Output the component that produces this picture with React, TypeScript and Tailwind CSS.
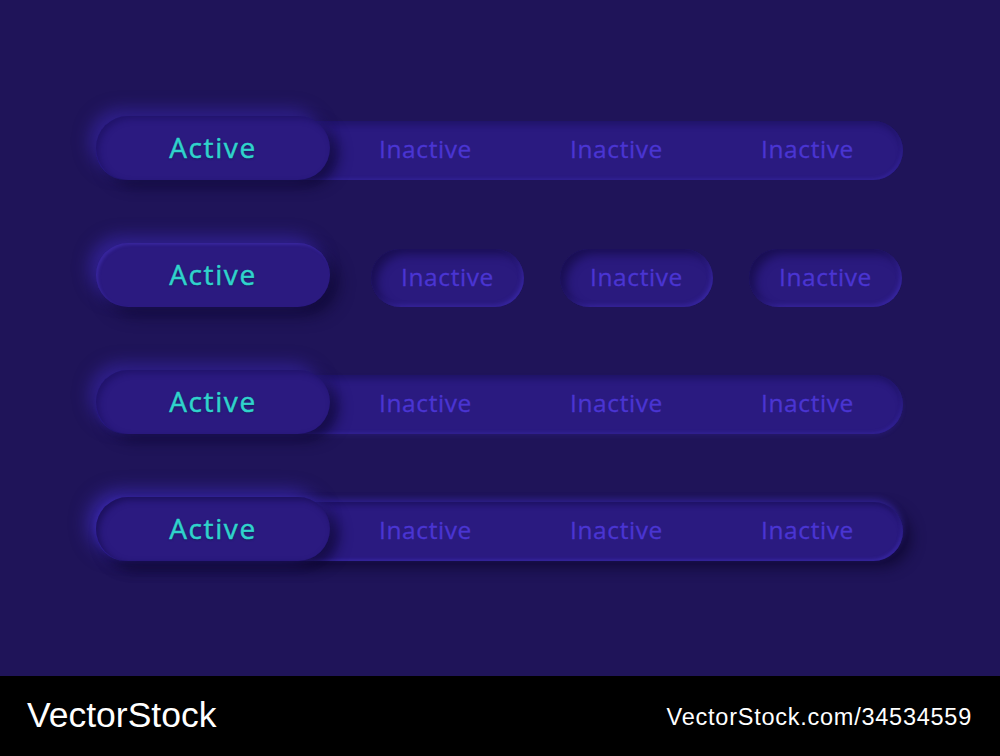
import React from "react";

const font = { fontFamily: '"Open Sans", "Noto Sans", sans-serif' };

function ActivePill({ variant }: { variant: number }) {
  const shadow =
    variant === 2
      ? "shadow-[-7px_-7px_16px_rgba(64,44,190,0.55),8px_8px_16px_rgba(14,8,48,0.75),inset_2px_2px_3px_rgba(80,60,210,0.35)]"
      : variant === 4
      ? "shadow-[-8px_-6px_18px_rgba(70,50,210,0.6),8px_6px_14px_rgba(14,8,48,0.8),inset_3px_3px_6px_rgba(18,10,70,0.6)]"
      : "shadow-[-7px_-7px_16px_rgba(64,44,190,0.5),8px_6px_14px_rgba(14,8,48,0.75),inset_3px_3px_6px_rgba(20,12,80,0.45)]";
  return (
    <div
      className={`flex h-[64px] w-[234px] shrink-0 items-center justify-center rounded-full bg-[#2b1a80] ${shadow}`}
    >
      <span
        className="-mt-[2px] text-[28px] leading-none tracking-[1.6px] text-[#30d3cc] [-webkit-text-stroke:0.5px_#30d3cc] [text-shadow:0_1px_2px_rgba(10,30,60,0.6)]"
        style={font}
      >
        Active
      </span>
    </div>
  );
}

function Label() {
  return (
    <div className="flex flex-1 items-center justify-center">
      <span
        className="-mt-[3px] text-[24.5px] leading-none tracking-[0.6px] text-[#4a35d2] [-webkit-text-stroke:0.3px_#4a35d2]"
        style={font}
      >
        Inactive
      </span>
    </div>
  );
}

function TrackRow({ variant }: { variant: number }) {
  const track =
    variant === 4
      ? "shadow-[0_-3px_6px_rgba(70,50,210,0.45),8px_6px_14px_rgba(14,8,48,0.8),inset_0_3px_5px_rgba(18,10,70,0.5),inset_-2px_-2px_3px_rgba(80,60,220,0.35)]"
      : variant === 3
      ? "shadow-[inset_0_4px_6px_rgba(18,10,70,0.45),inset_-2px_-2px_3px_rgba(70,52,200,0.3),0_2px_4px_rgba(60,44,180,0.2)]"
      : "shadow-[inset_0_4px_6px_rgba(18,10,70,0.4),inset_-2px_-2px_3px_rgba(70,52,200,0.3)]";
  return (
    <div className="flex h-[64px] w-[807px] items-end">
      <div className={`flex h-[59px] w-full items-end rounded-full bg-[#2a1a80] ${track}`}>
        <ActivePill variant={variant} />
        <div className="flex h-[59px] flex-1 items-center">
          <Label />
          <Label />
          <Label />
        </div>
      </div>
    </div>
  );
}

function SmallPill() {
  return (
    <div className="flex h-[58px] w-[153px] shrink-0 items-center justify-center rounded-full bg-[#2a1a7e] shadow-[inset_6px_5px_10px_rgba(18,10,66,0.7),inset_-2px_-2px_4px_rgba(76,56,210,0.45)]">
      <span
        className="-mt-[2px] text-[24.5px] leading-none tracking-[0.6px] text-[#4a35d2] [-webkit-text-stroke:0.3px_#4a35d2]"
        style={font}
      >
        Inactive
      </span>
    </div>
  );
}

function PillsRow() {
  return (
    <div className="flex h-[64px] w-[807px] items-end">
      <ActivePill variant={2} />
      <div className="ml-[41px] flex gap-[36px]">
        <SmallPill />
        <SmallPill />
        <SmallPill />
      </div>
    </div>
  );
}

export default function App() {
  return (
    <div className="flex h-[756px] w-[1000px] flex-col bg-[#1f1459]">
      <div className="flex h-[676px] flex-col gap-[63px] pl-[96px] pt-[116px]">
        <TrackRow variant={1} />
        <PillsRow />
        <TrackRow variant={3} />
        <TrackRow variant={4} />
      </div>
      <div className="flex h-[80px] items-center justify-between bg-black pl-[27px] pr-[28px]">
        <span
          className="text-[35.5px] leading-none text-white"
          style={{ fontFamily: '"Liberation Sans", Arial, sans-serif' }}
        >
          VectorStock
        </span>
        <span
          className="mt-[3px] text-[23.5px] leading-none tracking-[0.75px] text-white"
          style={{ fontFamily: '"Liberation Sans", Arial, sans-serif' }}
        >
          VectorStock.com/34534559
        </span>
      </div>
    </div>
  );
}
